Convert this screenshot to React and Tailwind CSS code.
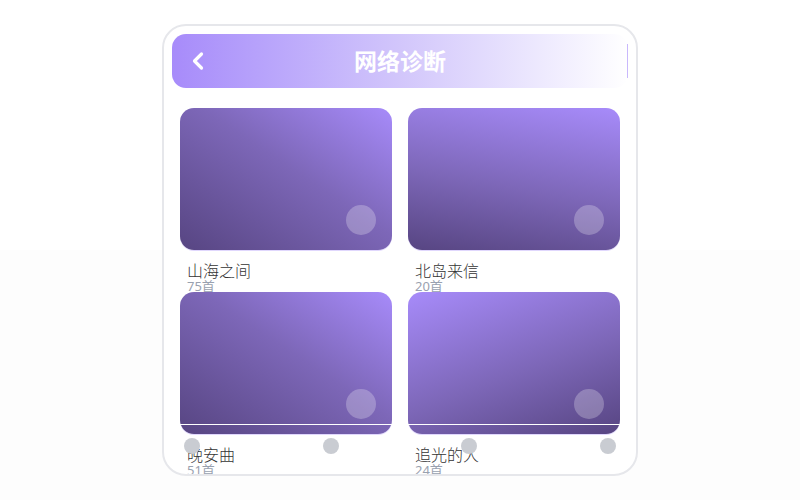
import { ChevronLeft } from "lucide-react";

const albums = [
  { title: "山海之间", count: "75首", bg: "bg-[linear-gradient(to_top_right,#574582,#7d67b8_55%,#a78bfa)]" },
  { title: "北岛来信", count: "20首", bg: "bg-[linear-gradient(190deg,#a78bfa,#7d67b8_55%,#574582)]" },
  { title: "晚安曲", count: "51首", bg: "bg-[linear-gradient(to_top_right,#574582,#7d67b8_55%,#a78bfa)]" },
  { title: "追光的人", count: "24首", bg: "bg-[linear-gradient(160deg,#a78bfa,#7d67b8_55%,#574582)]" },
];

function AlbumCard({ album }) {
  return (
    <div>
      <div className={`relative h-[142px] rounded-[14px] shadow-[0_1px_0_rgba(167,139,250,0.35)] ${album.bg}`}>
        <div className="absolute right-4 bottom-[15px] h-[30px] w-[30px] rounded-full bg-white/25" />
      </div>
      <div className="mt-3 px-[7px]">
        <div className="text-base leading-[18px] font-light text-[#333]">{album.title}</div>
        <div className="text-[13px] leading-[12px] text-gray-400">{album.count}</div>
      </div>
    </div>
  );
}

export default function App() {
  return (
    <div
      className="flex h-[500px] w-[800px] justify-center bg-[linear-gradient(to_bottom,#ffffff_50%,#fdfdfd_50%)] pt-6"
      style={{ fontFamily: '"Noto Sans", "Noto Sans CJK SC", sans-serif' }}
    >
      <div className="relative h-[452px] w-[476px] overflow-hidden rounded-[24px] border-2 border-[#e6e7eb] bg-white">
        {/* header */}
        <div className="relative mx-[8px] mt-2 flex h-[54px] items-center rounded-[14px] bg-gradient-to-r from-[#a78bfa] via-[#d2c6fb] to-white px-3">
          <ChevronLeft className="h-7 w-7 text-white" strokeWidth={2.75} />
          <div className="absolute inset-0 flex items-center justify-center text-[23px] font-bold text-white">
            网络诊断
          </div>
          <div className="absolute top-[10px] right-0 h-[34px] w-px bg-[#c9b8fc]" />
        </div>

        {/* grid */}
        <div className="mt-5 grid grid-cols-2 gap-x-4 px-4">
          {albums.map((a, i) => (
            <AlbumCard key={i} album={a} />
          ))}
        </div>

        {/* bottom nav */}
        <div className="absolute bottom-[20px] left-[9px] right-[9px] flex h-[30px] items-end justify-between border-t border-white px-[11px]">
          {[0, 1, 2, 3].map((i) => (
            <div key={i} className="h-4 w-4 rounded-full bg-[#c9ccd2]" />
          ))}
        </div>
      </div>
    </div>
  );
}
